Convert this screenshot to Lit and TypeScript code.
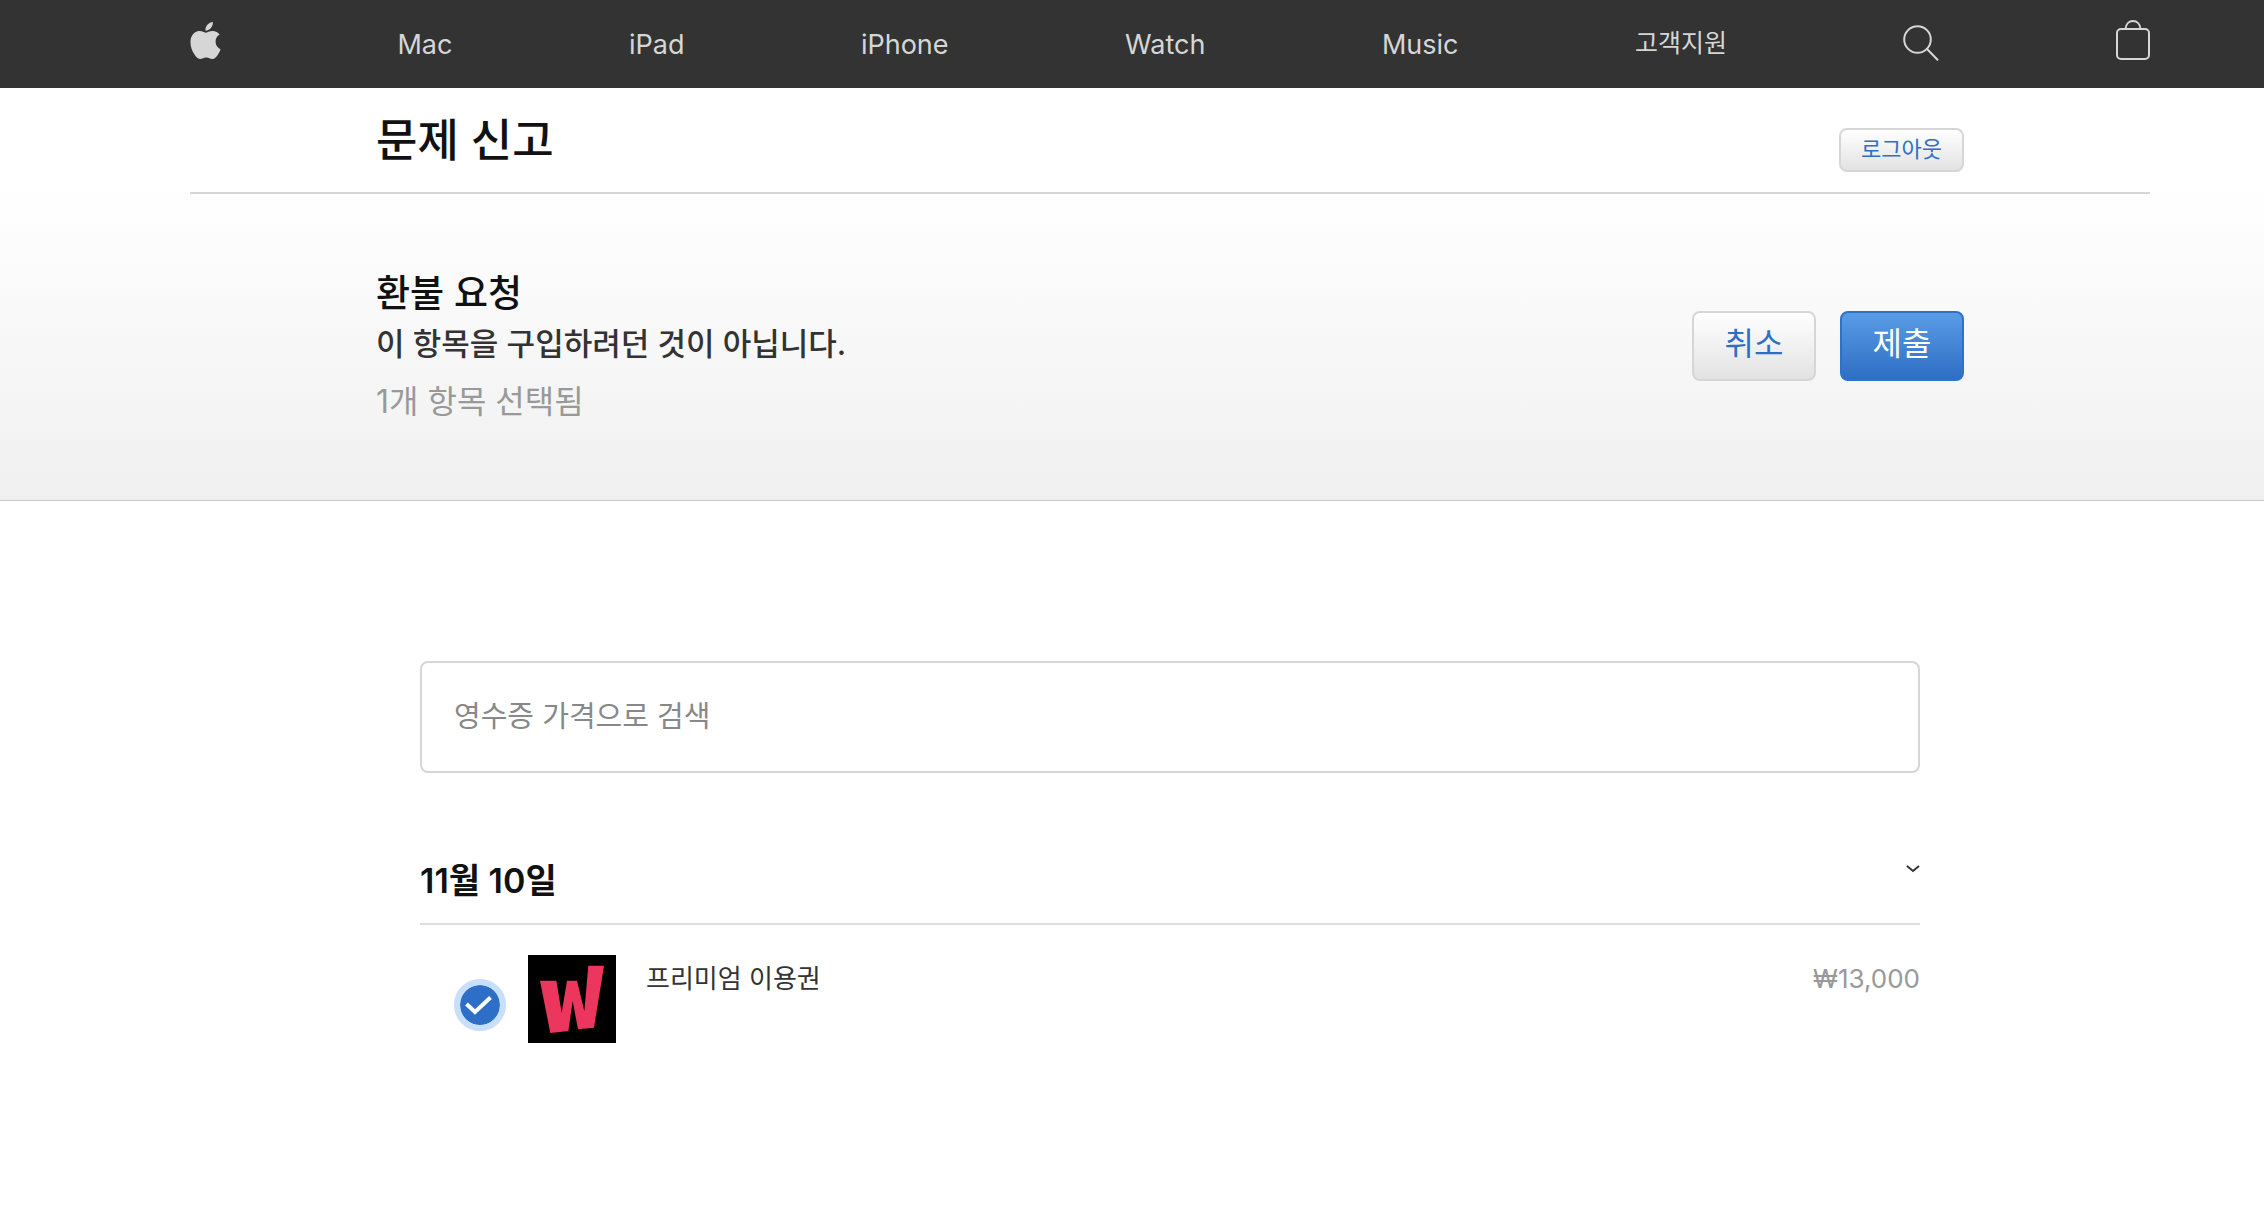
import { LitElement, html, css, svg } from "lit";
import { customElement, state } from "lit/decorators.js";

const appleMark = svg`<path fill="currentColor" d="M12.152 6.896c-.948 0-2.415-1.078-3.96-1.04-2.04.027-3.91 1.183-4.961 3.014-2.117 3.675-.546 9.103 1.519 12.09 1.013 1.454 2.208 3.09 3.792 3.039 1.52-.065 2.09-.987 3.935-.987 1.831 0 2.35.987 3.96.948 1.637-.026 2.676-1.48 3.676-2.948 1.156-1.688 1.636-3.325 1.662-3.415-.039-.013-3.182-1.221-3.22-4.857-.026-3.04 2.48-4.494 2.597-4.559-1.429-2.09-3.623-2.324-4.39-2.376-2-.156-3.675 1.09-4.61 1.09zM15.53 3.83c.843-1.012 1.4-2.427 1.245-3.83-1.207.052-2.662.805-3.532 1.818-.78.896-1.454 2.338-1.273 3.714 1.338.104 2.715-.688 3.559-1.701"/>`;

@customElement("site-nav")
class SiteNav extends LitElement {
  static styles = css`
    :host {
      display: block;
      background: #333;
      color: #d6d6d6;
    }
    .bar {
      display: flex;
      justify-content: space-between;
      align-items: center;
      height: 88px;
      padding: 0 114px 0 190px;
    }
    .link {
      display: flex;
      color: inherit;
      text-decoration: none;
      font-size: 27px;
      line-height: 42px;
      padding-top: 2px;
    }
    .korean {
      font-size: 25px;
      padding: 0 0 2px;
    }
    .icon {
      display: block;
      padding-bottom: 10px;
    }
    .search {
      padding-bottom: 4px;
    }
  `;

  render() {
    return html`
      <nav class="bar">
        <a class="link" href="#apple" aria-label="Apple">
          <svg class="icon" width="31" height="37" viewBox="2 0 20 24" aria-hidden="true">${appleMark}</svg>
        </a>
        ${["Mac", "iPad", "iPhone", "Watch", "Music"].map(
          (name) => html`<a class="link" href="#${name.toLowerCase()}">${name}</a>`
        )}
        <a class="link korean" href="#support">고객지원</a>
        <a class="link" href="#search" aria-label="검색">
          <svg class="icon search" width="36" height="36" viewBox="0 0 36 36" fill="none" stroke="currentColor" stroke-width="2" aria-hidden="true">
            <circle cx="14.5" cy="14.5" r="13.3" />
            <path d="M24 24 34.5 34.8" stroke-linecap="round" />
          </svg>
        </a>
        <a class="link" href="#bag" aria-label="장바구니">
          <svg class="icon" width="34" height="40" viewBox="0 0 34 40" fill="none" stroke="currentColor" stroke-width="2" aria-hidden="true">
            <rect x="1" y="9" width="32" height="30" rx="4" />
            <path d="M9.5 9c.4-5 3.500-8 7.500-8s7.100 3 7.500 8" />
          </svg>
        </a>
      </nav>
    `;
  }
}

@customElement("purchase-item")
class PurchaseItem extends LitElement {
  @state() private checked = true;

  static styles = css`
    :host {
      display: block;
    }
    .row {
      display: flex;
      gap: 30px;
      padding: 30px 0 30px 34px;
    }
    .pick {
      display: flex;
      align-items: center;
      gap: 22px;
      cursor: pointer;
    }
    .check {
      display: grid;
      margin-top: 12px;
    }
    .box,
    .tick {
      grid-area: 1 / 1;
      width: 52px;
      height: 52px;
      box-sizing: border-box;
    }
    .box {
      appearance: none;
      margin: 0;
      border: 6px solid transparent;
      border-radius: 50%;
      background: #fff;
      box-shadow: inset 0 0 0 2px #d6d6d6;
      cursor: pointer;
    }
    .box:checked {
      border-color: #c7dffb;
      background: #2d6fc6;
      background-clip: padding-box;
      box-shadow: none;
    }
    .tick {
      pointer-events: none;
    }
    .art {
      display: block;
    }
    .name,
    .price {
      font-size: 26px;
      line-height: 48px;
    }
    .name {
      color: #333;
      flex: 1;
    }
    .price {
      color: #999;
    }
  `;

  render() {
    return html`
      <div class="row">
        <label class="pick" for="item">
          <span class="check">
            <input
              class="box"
              id="item"
              type="checkbox"
              aria-label="프리미엄 이용권"
              .checked=${this.checked}
              @change=${(e: Event) => (this.checked = (e.target as HTMLInputElement).checked)}
            />
            <svg class="tick" viewBox="0 0 52 52" fill="none" stroke="#fff" stroke-width="4" aria-hidden="true">
              <path d="M12.500 25 21 33 36.500 18.500" />
            </svg>
          </span>
          <svg class="art" width="88" height="88" viewBox="0 0 264 264" aria-hidden="true">
            <rect width="264" height="264" fill="#000" />
            <path fill="#ec365d" d="M36 77H85L101 174 117 77H147L169 169 181 32H228L198 218 150 223 134 138 121 228 67 234Z" />
          </svg>
        </label>
        <span class="name">프리미엄 이용권</span>
        <span class="price">₩13,000</span>
      </div>
    `;
  }
}

@customElement("app-root")
class AppRoot extends LitElement {
  @state() private open = true;

  static styles = css`
    :host {
      display: block;
      font-family: Inter, "Noto Sans CJK KR", sans-serif;
      color: #111;
      background: #fff;
    }
    .hero {
      padding: 0 114px 0 190px;
      background: linear-gradient(#fff, #fff 24%, #f0f0f0);
      border-bottom: 1px solid #c8c8c8;
    }
    .titlebar {
      display: flex;
      justify-content: space-between;
      align-items: flex-start;
      padding: 22px 186px 20px;
      border-bottom: 2px solid #d6d6d6;
    }
    .title {
      margin: 0;
      font-size: 45px;
      font-weight: 500;
      line-height: 62px;
    }
    .request {
      display: flex;
      justify-content: space-between;
      align-items: center;
      padding: 75px 186px 73px;
    }
    .heading,
    .reason,
    .count {
      margin: 0;
      line-height: 50px;
    }
    .heading {
      font-size: 37px;
      font-weight: 500;
    }
    .reason {
      font-size: 31px;
      font-weight: 500;
      color: #333;
    }
    .count {
      margin-top: 8px;
      font-size: 32px;
      color: #999;
    }
    .actions {
      display: flex;
      gap: 24px;
      padding-bottom: 4px;
    }
    .btn {
      box-sizing: border-box;
      padding: 0 30px 4px;
      border: 2px solid #d6d6d6;
      border-radius: 8px;
      background: linear-gradient(#fff, #e2e2e2);
      color: #2d6fc6;
      font-family: inherit;
      font-size: 32px;
      line-height: 62px;
      min-width: 124px;
      cursor: pointer;
    }
    .small {
      margin-top: 18px;
      padding: 0 20px 2px;
      font-size: 22px;
      line-height: 38px;
    }
    .primary {
      border-color: #2d72c9;
      background: linear-gradient(#5a9de6, #2d6dc3);
      background-origin: border-box;
      color: #fff;
    }
    .list {
      max-width: 1500px;
      margin: 0 auto;
      padding: 160px 0 0 76px;
    }
    .field {
      display: block;
      box-sizing: border-box;
      width: 100%;
      height: 112px;
      padding: 0 32px 2px;
      border: 2px solid #d6d6d6;
      border-radius: 8px;
      background: #fff;
      color: #333;
      font-family: inherit;
      font-size: 29px;
    }
    .field::placeholder {
      color: #888;
      opacity: 1;
    }
    .group {
      display: flex;
      justify-content: space-between;
      align-items: flex-start;
      margin-top: 80px;
      padding-bottom: 14px;
      border-bottom: 2px solid #ddd;
    }
    .date {
      margin: 0;
      font-size: 34px;
      font-weight: 600;
      line-height: 56px;
    }
    .toggle {
      display: flex;
      margin-top: 8px;
      padding: 4px 0;
      border: 0;
      background: none;
      color: #333;
      cursor: pointer;
    }
  `;

  render() {
    return html`
      <site-nav></site-nav>
      <header class="hero">
        <div class="titlebar">
          <h1 class="title">문제 신고</h1>
          <button class="btn small" type="button">로그아웃</button>
        </div>
        <section class="request">
          <div>
            <h2 class="heading">환불 요청</h2>
            <p class="reason">이 항목을 구입하려던 것이 아닙니다.</p>
            <p class="count">1개 항목 선택됨</p>
          </div>
          <div class="actions">
            <button class="btn" type="button">취소</button>
            <button class="btn primary" type="button">제출</button>
          </div>
        </section>
      </header>
      <main class="list">
        <input class="field" type="search" aria-label="영수증 가격으로 검색" placeholder="영수증 가격으로 검색" />
        <div class="group">
          <h3 class="date">11월 10일</h3>
          <button
            class="toggle"
            type="button"
            aria-label="11월 10일"
            aria-expanded=${this.open}
            @click=${() => (this.open = !this.open)}
          >
            <svg width="14" height="8" viewBox="0 0 14 8" fill="none" stroke="currentColor" stroke-width="2" aria-hidden="true">
              <path d="M1 1 7 6 13 1" />
            </svg>
          </button>
        </div>
        ${this.open ? html`<purchase-item></purchase-item>` : null}
      </main>
    `;
  }
}
